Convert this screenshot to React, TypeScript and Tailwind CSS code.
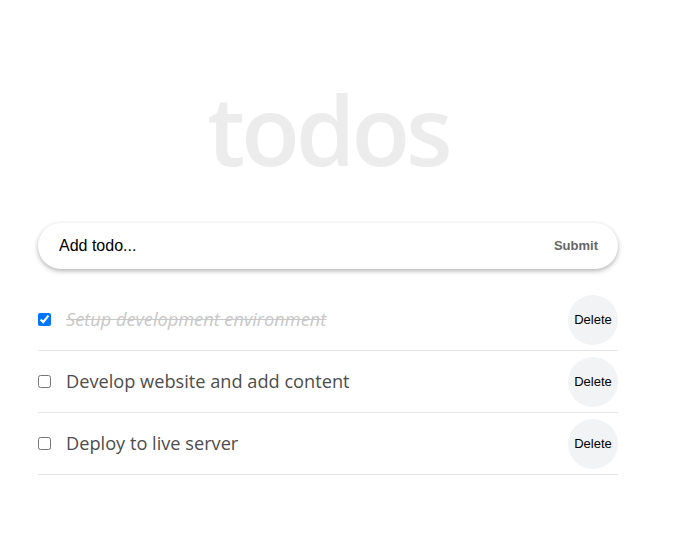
import React, { useState } from "react";

type Todo = { id: number; text: string; done: boolean };

export default function App() {
  const [todos, setTodos] = useState<Todo[]>([
    { id: 1, text: "Setup development environment", done: true },
    { id: 2, text: "Develop website and add content", done: false },
    { id: 3, text: "Deploy to live server", done: false },
  ]);

  const toggle = (id: number) =>
    setTodos((t) => t.map((x) => (x.id === id ? { ...x, done: !x.done } : x)));
  const remove = (id: number) => setTodos((t) => t.filter((x) => x.id !== id));

  return (
    <div className="min-h-[550px] w-[680px] bg-white">
      <div className="ml-[38px] w-[580px] pt-[79px]">
        <h1
          className="text-center text-[96px] font-semibold leading-[100px] tracking-[-4px] text-[#ececec]"
          style={{ fontFamily: '"Open Sans", sans-serif' }}
        >
          todos
        </h1>
        <form
          className="mt-[44px] flex h-[46px] items-center rounded-full bg-white pl-[21px] pr-[20px] shadow-[0_2px_5px_rgba(0,0,0,0.3)]"
          style={{ fontFamily: '"Liberation Sans", Arial, sans-serif' }}
          onSubmit={(e) => e.preventDefault()}
        >
          <input
            className="flex-1 bg-transparent text-[16px] text-black outline-none placeholder:text-black"
            placeholder="Add todo..."
          />
          <button type="submit" className="text-[13px] font-bold text-[#666666]">
            Submit
          </button>
        </form>
        <ul className="mt-[20px]">
          {todos.map((t) => (
            <li
              key={t.id}
              className="flex h-[62px] items-center border-b border-[#e6e6e6]"
            >
              <input
                type="checkbox"
                checked={t.done}
                onChange={() => toggle(t.id)}
                className="h-[13px] w-[13px] accent-[#0075ff]"
              />
              <span
                className={
                  "ml-[15px] flex-1 text-[18.2px] " +
                  (t.done ? "italic text-[#c8c8c8] line-through" : "text-[#4d4d4d]")
                }
                style={{ fontFamily: '"Open Sans", sans-serif' }}
              >
                {t.text}
              </span>
              <button
                onClick={() => remove(t.id)}
                className="h-[50px] w-[50px] rounded-full bg-[#f2f3f5] text-[13px] text-black"
                style={{ fontFamily: '"Liberation Sans", Arial, sans-serif' }}
              >
                Delete
              </button>
            </li>
          ))}
        </ul>
      </div>
    </div>
  );
}
